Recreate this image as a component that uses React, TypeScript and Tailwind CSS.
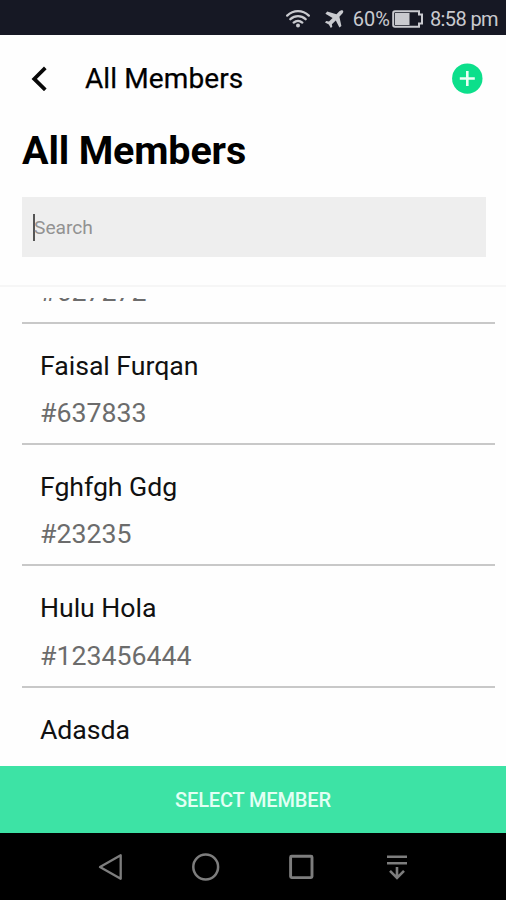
import React from "react";

const members = [
  { name: "Faisal Khan", id: "#627272" },
  { name: "Faisal Furqan", id: "#637833" },
  { name: "Fghfgh Gdg", id: "#23235" },
  { name: "Hulu Hola", id: "#123456444" },
  { name: "Adasda", id: "" },
];

function StatusBar() {
  return (
    <div className="flex h-[35px] shrink-0 items-center justify-end bg-[#161824] pr-[8px] pt-[3px] text-[#c9cacf]">
      <svg width="24" height="18" viewBox="0 0 24 18" fill="none" stroke="currentColor" strokeWidth="2.3" strokeLinecap="round">
        <path d="M1.2 5.6C7.4-.3 16.6-.3 22.8 5.6M4.4 9.2c4.4-4 10.8-4 15.2 0M7.7 12.6c2.5-2.2 6.1-2.2 8.6 0" />
        <circle cx="12" cy="15.6" r="2" fill="currentColor" stroke="none" />
      </svg>
      <svg className="ml-[15px]" width="19" height="18" viewBox="0 0 19 18" fill="currentColor">
        <path d="M17.8.5c-1.1-.8-2.6 0-3.7 1.1l-2.6 2.6L2.2 1.5.4 3.7l7.2 4.2-3.6 3.6-2.8-.4L0 12.6l3.8 2 2 3.4 1.5-1.2-.4-2.6 3.9-3.6 3.6 6.8 2-1.5-2-9.2 2.5-2.6C18 2.9 18.8 1.4 17.8.5Z" />
      </svg>
      <span className="ml-[9px] text-[20px] leading-[24px]">60%</span>
      <svg className="ml-[2px]" width="32" height="18" viewBox="0 0 32 18">
        <path d="M3 1.2h24v3.2h3v9.2h-3v3.2H3c-1.2 0-1.8-.6-1.8-1.8V3c0-1.2.6-1.8 1.8-1.8Z" fill="none" stroke="currentColor" strokeWidth="2" />
        <path d="M3 3h14.5v12H3z" fill="currentColor" />
      </svg>
      <span className="ml-[6px] text-[20px] leading-[24px] tracking-[-0.6px]">8:58 pm</span>
    </div>
  );
}

function NavBar() {
  return (
    <div className="flex h-[67px] shrink-0 items-center bg-black pl-[98px] text-[#7d7d7d]">
      <svg width="25" height="28" viewBox="0 0 25 28" fill="none" stroke="currentColor" strokeWidth="2.3" strokeLinejoin="round">
        <path d="M22.7 2.2v23.6L2 14Z" />
      </svg>
      <svg className="ml-[69px]" width="28" height="28" viewBox="0 0 28 28" fill="none" stroke="currentColor" strokeWidth="2.5">
        <circle cx="13.7" cy="14" r="12.4" />
      </svg>
      <svg className="ml-[69px]" width="25" height="26" viewBox="0 0 25 26" fill="none" stroke="currentColor" strokeWidth="2.9">
        <rect x="1.6" y="2.2" width="21.4" height="21.4" rx="1" />
      </svg>
      <svg className="ml-[73px]" width="20" height="26" viewBox="0 0 20 26" fill="none" stroke="currentColor" strokeWidth="2.6">
        <path d="M0 2.8h20M0 9.3h20M10 13v11M3 16.8l7 7 7-7" />
      </svg>
    </div>
  );
}

export default function App() {
  return (
    <div className="flex h-[900px] w-[506px] flex-col overflow-hidden bg-[#fefefe] font-[Roboto,sans-serif] text-black">
      <StatusBar />
      <header className="flex h-[87px] shrink-0 items-center pl-[31px] pr-[23px]">
        <svg width="16" height="25" viewBox="0 0 16 25" fill="none" stroke="#080808" strokeWidth="3.7">
          <path d="M14.3 1.9 3.2 12.9l11.1 11" />
        </svg>
        <span className="ml-[38px] text-[28px] leading-[36px] tracking-[0.1px] text-black [-webkit-text-stroke:0.25px_black]">All Members</span>
        <svg className="ml-auto" width="31" height="31" viewBox="0 0 31 31">
          <circle cx="15.3" cy="15.6" r="15.2" fill="#0cdf8b" />
          <path d="M15.3 8v15M7.8 15.5h15" stroke="#eafff5" strokeWidth="2.6" />
        </svg>
      </header>
      <h1 className="h-[75px] shrink-0 pl-[22px] pt-[5px] text-[39.5px] font-bold leading-[48px] tracking-[-0.15px]">All Members</h1>
      <div className="ml-[22px] flex h-[60px] w-[464px] shrink-0 items-center bg-[#eeeeee] pl-[11px]">
        <span className="h-[27px] w-[2px] bg-[#555]" />
        <span className="-ml-px pt-px text-[19.2px] leading-[24px] text-[#929292]">Search</span>
      </div>
      <div className="mt-[28px] h-[2px] shrink-0 bg-[#f6f6f6]" />
      <main className="mt-[11px] min-h-0 flex-1 overflow-hidden">
        <ul className="-mt-[95.7px] ml-[22px] w-[473px]">
          {members.map((m) => (
            <li key={m.name} className="h-[121.4px] border-b-2 border-[#c8c8c8] pl-[18px] pt-[18.9px] text-[26.7px] leading-[47.3px]">
              <div className="tracking-[-0.05px] text-[#111]">{m.name}</div>
              <div className="text-[#6c6c6c]">{m.id}</div>
            </li>
          ))}
        </ul>
      </main>
      <button className="h-[67px] shrink-0 bg-[#3de3a5] text-[20px] font-medium tracking-[-0.15px] text-[#e3fff4]">SELECT MEMBER</button>
      <NavBar />
    </div>
  );
}
